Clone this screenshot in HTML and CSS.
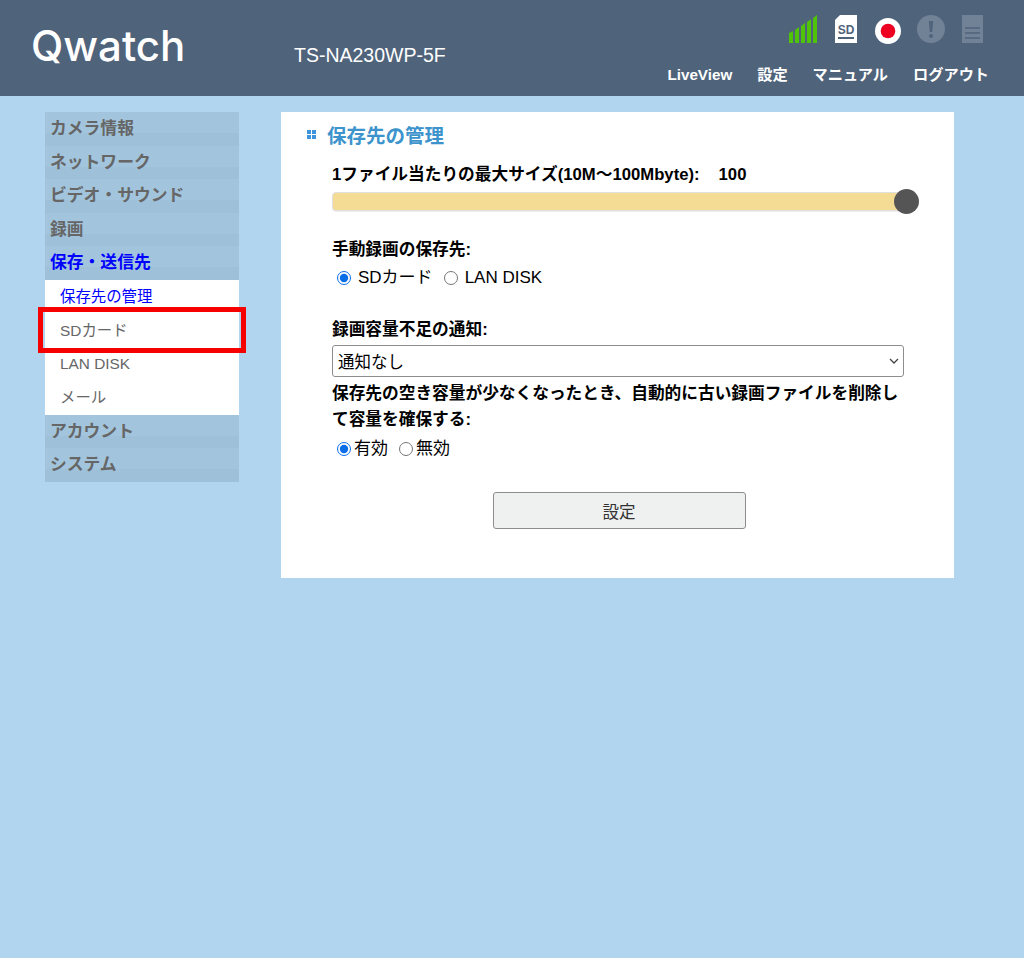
FILE: index.html
```html
<!DOCTYPE html>
<html lang="ja">
<head>
  <meta charset="UTF-8">
  <meta name="viewport" content="width=device-width, initial-scale=1.0">
  <title>Qwatch</title>
  <link rel="stylesheet" href="styles.css">
</head>
<body>
  <header class="top">
    <div class="logo">Qwatch</div>
    <div class="model">TS-NA230WP-5F</div>
    <div class="top-right">
      <div class="status">
        <svg class="ico-signal" width="29" height="28" viewBox="0 0 29 28">
          <path fill="#4fc20a" d="M0 18l4-2v12H0zM6 15l4-3v16H6zM12 11l4-3v20h-4zM18 7l4-3v24h-4zM24 3l4-3v28h-4z"/>
        </svg>
        <svg class="ico-sd" width="22" height="28" viewBox="0 0 22 28">
          <path fill="#fff" d="M5 0h17v28H0V5z"/>
          <rect x="3" y="22" width="16" height="2" fill="#4f637b"/>
          <text x="11" y="18.5" class="sd-text">SD</text>
        </svg>
        <svg class="ico-rec" width="26" height="26" viewBox="0 0 26 26">
          <circle cx="13" cy="13" r="13" fill="#fff"/>
          <circle cx="13" cy="13" r="7.3" fill="#ee0022"/>
        </svg>
        <svg class="ico-alert" width="28" height="28" viewBox="0 0 28 28">
          <circle cx="14" cy="14" r="14" fill="#728296"/>
          <path fill="#4f637b" d="M11.8 6h4.4l-1 11h-2.4z"/>
          <circle cx="14" cy="21" r="2" fill="#4f637b"/>
        </svg>
        <svg class="ico-log" width="21" height="28" viewBox="0 0 21 28">
          <rect width="21" height="28" fill="#728296"/>
          <path stroke="#4f637b" stroke-width="1.6" d="M3 13h15M3 18h15M3 23h15"/>
        </svg>
      </div>
      <nav class="top-nav">
        <a href="#">LiveView</a>
        <a href="#">設定</a>
        <a href="#">マニュアル</a>
        <a href="#">ログアウト</a>
      </nav>
    </div>
  </header>

  <div class="wrap">
    <aside class="side">
      <a class="side-head" href="#">カメラ情報</a>
      <a class="side-head" href="#">ネットワーク</a>
      <a class="side-head" href="#">ビデオ・サウンド</a>
      <a class="side-head" href="#">録画</a>
      <a class="side-head now" href="#">保存・送信先</a>
      <div class="side-sub">
        <a class="now" href="#">保存先の管理</a>
        <a class="marked" href="#">SDカード<span class="red-box"></span></a>
        <a href="#">LAN DISK</a>
        <a href="#">メール</a>
      </div>
      <a class="side-head" href="#">アカウント</a>
      <a class="side-head" href="#">システム</a>
    </aside>

    <main class="card">
      <h1 class="title">
        <span class="bullet"><i></i><i></i><i></i><i></i></span>
        保存先の管理
      </h1>
      <div class="form">
        <p class="lbl">1ファイル当たりの最大サイズ(10M〜100Mbyte):<span class="val">100</span></p>
        <div class="slider"><span class="knob"></span></div>

        <p class="lbl gap-save">手動録画の保存先:</p>
        <div class="radios radios-save">
          <label><input type="radio" name="save" checked>SDカード</label>
          <label><input type="radio" name="save">LAN DISK</label>
        </div>

        <p class="lbl gap-notice">録画容量不足の通知:</p>
        <div class="select">通知なし
          <svg width="10" height="6" viewBox="0 0 10 6"><path d="M1 1l4 4 4-4" fill="none" stroke="#444" stroke-width="1.3"/></svg>
        </div>
        <p class="lbl long">保存先の空き容量が少なくなったとき、自動的に古い録画ファイルを削除して容量を確保する:</p>
        <div class="radios radios-auto">
          <label><input type="radio" name="auto" checked>有効</label>
          <label><input type="radio" name="auto">無効</label>
        </div>

        <div class="btn-row"><button class="btn">設定</button></div>
      </div>
    </main>
  </div>
</body>
</html>
```

FILE: styles.css
```css
* {
  margin: 0;
  padding: 0;
  box-sizing: border-box;
}

html, body {
  height: 100%;
}

body {
  background-color: #b1d5ee;
  font-family: "Liberation Sans", "Noto Sans CJK JP", sans-serif;
  font-size: 16px;
  color: #000;
}

a {
  text-decoration: none;
}

/* header */
.top {
  height: 96px;
  background-color: #4f637b;
  display: flex;
  color: #fff;
}

.logo {
  width: 294px;
  padding: 19px 0 0 31px;
  font-family: "Inter", sans-serif;
  font-size: 42px;
  font-weight: 500;
  line-height: 54px;
}

.model {
  padding-top: 44px;
  font-size: 19.5px;
  line-height: 22px;
}

.top-right {
  margin-left: auto;
  padding-right: 35px;
  display: flex;
  flex-direction: column;
  align-items: flex-end;
}

.status {
  display: flex;
  align-items: center;
  height: 28px;
  margin-top: 15px;
  padding-right: 6px;
}

.ico-sd { margin-left: 17px; }
.ico-rec { margin-left: 18px; margin-top: 3px; }
.ico-alert { margin-left: 16px; }
.ico-log { margin-left: 17px; }

.sd-text {
  font-family: "Liberation Sans", sans-serif;
  font-size: 12px;
  font-weight: 700;
  fill: #4f637b;
  text-anchor: middle;
}

.top-nav {
  display: flex;
  gap: 25px;
  margin-top: 22px;
  font-size: 15.2px;
  font-weight: 700;
  line-height: 20px;
}

.top-nav a {
  color: #fff;
}

/* layout */
.wrap {
  display: flex;
  align-items: flex-start;
  padding: 16px 0 0 45px;
}

/* side menu */
.side {
  width: 194px;
  flex-shrink: 0;
}

.side-head {
  display: block;
  height: 33.6px;
  padding-left: 5px;
  font-size: 16.8px;
  font-weight: 700;
  line-height: 33px;
  color: #666;
  background: linear-gradient(#a2c5dd 0, #a2c5dd 63%, #9ec1d9 63%, #9ec1d9 100%);
}

.side-head.now {
  color: #0000ff;
}

.side-sub {
  background-color: #fff;
}

.side-sub a {
  display: block;
  height: 33.7px;
  padding-left: 15px;
  font-size: 15.4px;
  line-height: 33px;
  color: #666;
}

.side-sub a.now {
  color: #0000ff;
}

.marked {
  position: relative;
}

.red-box {
  position: absolute;
  left: -7px;
  top: -7px;
  width: 208px;
  height: 46px;
  border: 5px solid #f60000;
}

/* main card */
.card {
  width: 673px;
  height: 466px;
  margin-left: 42px;
  background-color: #fff;
}

.title {
  display: flex;
  align-items: center;
  height: 22px;
  margin-top: 11px;
  padding-left: 26px;
  font-size: 19.5px;
  font-weight: 700;
  color: #3d94cc;
}

.bullet {
  display: grid;
  grid-template-columns: 4px 4px;
  gap: 1px;
  margin-right: 11px;
}

.bullet i {
  display: block;
  height: 4px;
  background-color: #3f93d8;
}

.form {
  width: 574px;
  margin-left: 51px;
}

.lbl {
  font-size: 16.7px;
  font-weight: 700;
  line-height: 26px;
}

.val {
  margin-left: 19px;
}

.form > .lbl:first-child {
  margin-top: 17px;
}

.slider {
  position: relative;
  width: 575px;
  height: 19px;
  margin-top: 4px;
  background-color: #f5dc95;
  border: 1px solid #e0e0e0;
  border-radius: 4px;
  box-shadow: 0 1px 1px #eee;
}

.knob {
  position: absolute;
  right: -13px;
  top: -4px;
  width: 25px;
  height: 25px;
  border-radius: 50%;
  background-color: #555;
}

.gap-save {
  margin-top: 26px;
}

.radios {
  display: flex;
  font-size: 17px;
  line-height: 24px;
  gap: 6px;
  margin-top: 3px;
}

.radios label {
  display: flex;
  align-items: center;
}

.radios input {
  width: 14px;
  height: 14px;
  margin: 0 7px 0 5px;
  accent-color: #0a6ee8;
}

.radios-auto {
  margin-top: 4px;
}

.radios-auto input {
  margin-right: 3px;
}

.gap-notice {
  margin-top: 27px;
}

.select {
  display: flex;
  align-items: center;
  justify-content: space-between;
  width: 572px;
  height: 32px;
  margin-top: 2px;
  padding: 0 4px 0 5px;
  background-color: #fff;
  border: 1px solid #8d8d8d;
  border-radius: 3px;
  font-size: 16.5px;
}

.long {
  margin-top: 4px;
}

.btn-row {
  display: flex;
  justify-content: center;
  margin-top: 31px;
}

.btn {
  width: 253px;
  height: 37px;
  background-color: #eff0f0;
  border: 1px solid #8d8d8d;
  border-radius: 3px;
  font-family: inherit;
  font-size: 16.5px;
  color: #333;
}
```
